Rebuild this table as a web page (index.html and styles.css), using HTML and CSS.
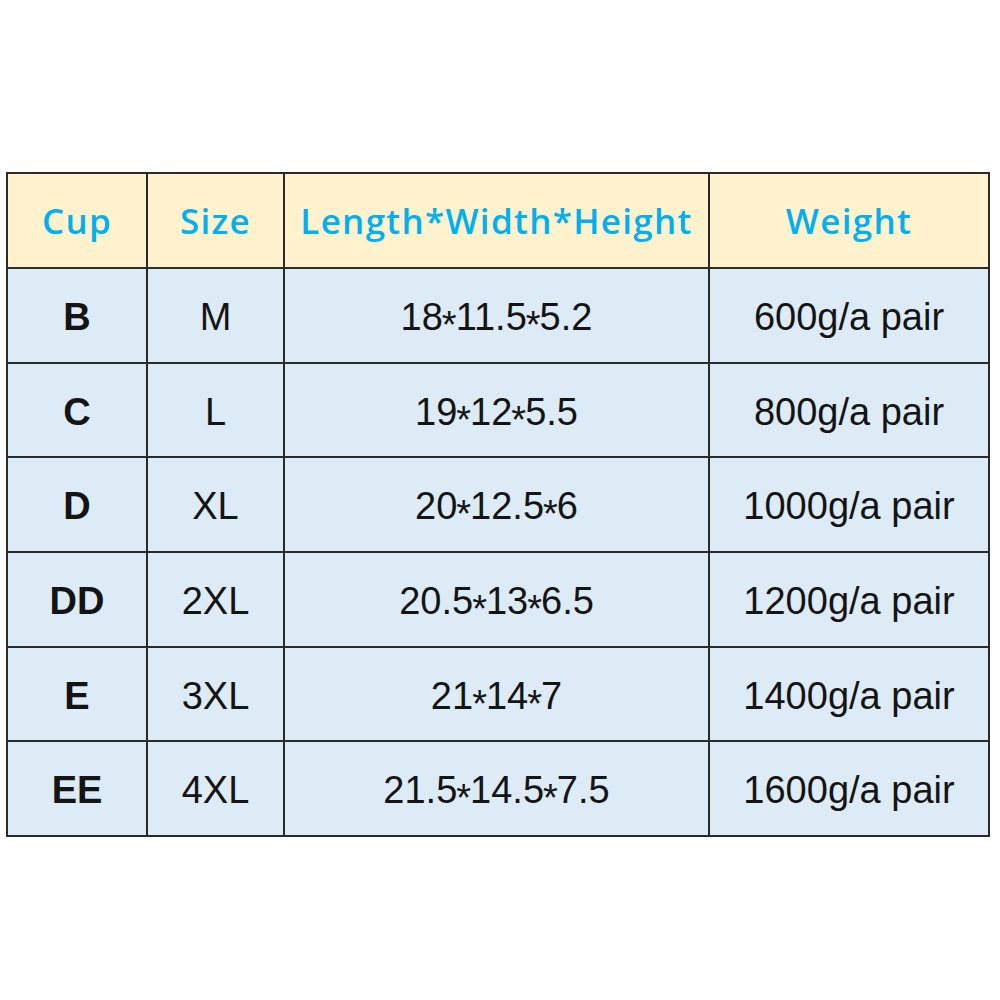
FILE: index.html
```html
<!DOCTYPE html>
<html>
<head>
<meta charset="utf-8">
<link rel="stylesheet" href="styles.css">
</head>
<body>
<div class="page">
<table class="sizes">
  <colgroup>
    <col class="c1"><col class="c2"><col class="c3"><col class="c4">
  </colgroup>
  <thead>
    <tr><th>Cup</th><th>Size</th><th>Length*Width*Height</th><th>Weight</th></tr>
  </thead>
  <tbody>
    <tr><td class="cup">B</td><td>M</td><td>18<span class="x">*</span>11.5<span class="x">*</span>5.2</td><td>600g/a pair</td></tr>
    <tr><td class="cup">C</td><td>L</td><td>19<span class="x">*</span>12<span class="x">*</span>5.5</td><td>800g/a pair</td></tr>
    <tr><td class="cup">D</td><td>XL</td><td>20<span class="x">*</span>12.5<span class="x">*</span>6</td><td>1000g/a pair</td></tr>
    <tr><td class="cup">DD</td><td>2XL</td><td>20.5<span class="x">*</span>13<span class="x">*</span>6.5</td><td>1200g/a pair</td></tr>
    <tr><td class="cup">E</td><td>3XL</td><td>21<span class="x">*</span>14<span class="x">*</span>7</td><td>1400g/a pair</td></tr>
    <tr><td class="cup">EE</td><td>4XL</td><td>21.5<span class="x">*</span>14.5<span class="x">*</span>7.5</td><td>1600g/a pair</td></tr>
  </tbody>
</table>
</div>
</body>
</html>
```
FILE: styles.css
```css
html, body { margin: 0; padding: 0; background: #ffffff; }
.page { padding: 172px 0 0 6px; }
.sizes {
  border-collapse: collapse;
  table-layout: fixed;
  width: 982px;
  font-family: "Liberation Sans", Arial, sans-serif;
}
.c1 { width: 140px; }
.c2 { width: 137px; }
.c3 { width: 425px; }
.c4 { width: 280px; }
.sizes th, .sizes td {
  border: 2px solid #2a2a2a;
  text-align: center;
  vertical-align: middle;
  padding: 0;
}
.sizes th {
  height: 93px;
  background: #fff2cc;
  color: #00b0f0;
  font-family: "Open Sans", "Noto Sans", sans-serif;
  font-weight: 600;
  font-size: 35px;
  letter-spacing: 1.3px;
}
.sizes td {
  height: 88.7px;
  padding-top: 4px;
  background: #ddebf7;
  color: #141414;
  font-size: 38px;
  font-weight: 400;
}
.sizes td.cup { font-weight: 700; }
.sizes .x {
  display: inline-block;
  margin: 0 -1px;
  transform: translateY(8px);
}
```
